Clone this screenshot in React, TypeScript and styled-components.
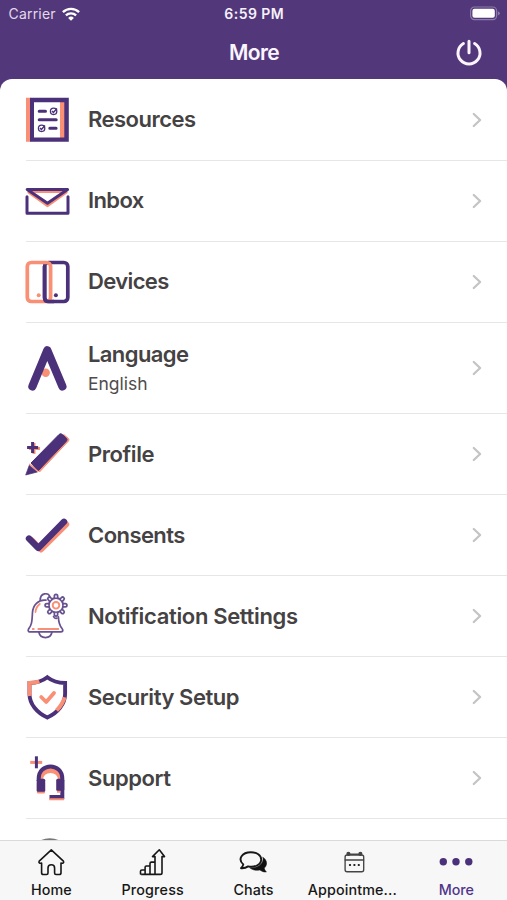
import React from "react";
import styled, { createGlobalStyle } from "styled-components";

const P = "#4b3179";
const O = "#f98f74";

const Global = createGlobalStyle`
  * { box-sizing: border-box; }
  body { margin: 0; background: #52387a; font-family: Inter, "Liberation Sans", sans-serif; }
`;

const Screen = styled.div`
  width: 507px;
  height: 900px;
  display: flex;
  flex-direction: column;
  overflow: hidden;
  background: #52387a;
`;

const StatusBar = styled.div`
  height: 27px;
  flex: none;
  display: grid;
  grid-template-columns: 1fr auto 1fr;
  align-items: center;
  padding: 0 7px 0 8.5px;
  color: #f6f0fb;
  font-size: 14px;
  line-height: 27px;
`;

const Carrier = styled.div`
  display: flex;
  align-items: center;
  gap: 6px;
  letter-spacing: 0.2px;
  color: #e2d8ec;
`;

const Clock = styled.div`
  font-weight: 600;
  letter-spacing: 0.45px;
`;

const Battery = styled.div`
  display: flex;
  justify-content: flex-end;
`;

const NavBar = styled.header`
  height: 52px;
  flex: none;
  display: grid;
  grid-template-columns: 1fr auto 1fr;
  align-items: center;
  padding-right: 24px;
`;

const Title = styled.h1`
  grid-column: 2;
  margin: 0 0 0 25px;
  color: #fbf5ff;
  font-size: 21px;
  font-weight: 600;
  line-height: 52px;
  letter-spacing: -0.55px;
`;

const PowerButton = styled.button`
  justify-self: end;
  display: flex;
  border: 0;
  padding: 0;
  background: none;
`;

const List = styled.main`
  flex: 1;
  min-height: 0;
  overflow: hidden;
  background: #fff;
  border-radius: 12px 12px 0 0;
`;

const Row = styled.div<{ $height: number }>`
  height: ${(p) => p.$height}px;
  display: flex;
  align-items: center;
  padding: 0 24px 0 23px;
`;

const Divider = styled.div`
  height: 1px;
  margin: 0 0 -1px 26px;
  background: #e6e6e6;
`;

const RowText = styled.div`
  flex: 1;
  margin-left: 17px;
`;

const RowIconSvg = styled.svg`
  flex: none;
  margin-top: 1.2px;
`;

const ChevronSvg = styled.svg`
  flex: none;
  margin-top: 1.2px;
`;

const Label = styled.div<{ $spacing: number }>`
  color: #454243;
  font-size: 22px;
  font-weight: 600;
  line-height: 30px;
  letter-spacing: ${(p) => p.$spacing}px;
  white-space: nowrap;
`;

const Sub = styled.div`
  color: #4f4c4d;
  font-size: 17.5px;
  line-height: 24px;
  margin-top: 3.7px;
`;

const TabBar = styled.nav`
  height: 60px;
  flex: none;
  display: grid;
  grid-template-columns: repeat(5, 1fr);
  background: #f7f7f7;
  border-top: 1px solid #dadada;
`;

const Tab = styled.div<{ $active?: boolean }>`
  display: flex;
  flex-direction: column;
  align-items: center;
  padding-top: 5px;
  color: ${(p) => (p.$active ? "#50358a" : "#161616")};
  font-size: 14.3px;
  font-weight: 500;
  line-height: 20px;
  white-space: nowrap;
`;

const TabLabel = styled.span<{ $spacing: number; $shift?: number }>`
  margin: 2px 0 0;
  transform: translateX(${(p) => p.$shift ?? 0}px);
  letter-spacing: ${(p) => p.$spacing}px;
`;

const Icon = ({ children }: { children: React.ReactNode }) => (
  <RowIconSvg width="48" height="48" viewBox="0 0 48 48" fill="none" stroke={P}>
    {children}
  </RowIconSvg>
);

const ResourcesIcon = () => (
  <Icon>
    <g stroke="none">
      <path fill={O} d="M3 1.8h4.5v44H3z" />
      <path fill={P} d="M7 1.8h38.8v44H7z" />
      <path fill="#fff" d="M11 6.2h26v35.4H11z" />
      <path fill={O} d="M37 6.2h4.3v35.4H37z" />
    </g>
    <path d="M16.2 15.3h6.3M16.2 23.7h17M26.8 32.3h6.3" strokeWidth="3" strokeLinecap="round" />
    <circle cx="30.6" cy="15.3" r="3.2" strokeWidth="1.3" />
    <circle cx="18.6" cy="32.3" r="3.2" strokeWidth="1.3" />
    <path d="m29 15 1.4 1.5 3.6-4M17 32l1.4 1.5 3.6-4" strokeWidth="1.5" />
  </Icon>
);

const InboxIcon = () => (
  <Icon>
    <path d="M6 15.3h37L24.5 28.5z" stroke={O} strokeWidth="3.2" strokeLinejoin="round" />
    <path d="M6 14 24.5 26 43 14z" fill="#fff" stroke="none" />
    <path d="M7 15h35" stroke={O} strokeWidth="2" />
    <path d="M4.2 12.4h40.4L24.5 26.2z" strokeWidth="3" strokeLinejoin="round" />
    <path d="M4 19.7v16.5h41V19.7" strokeWidth="3" strokeLinecap="round" strokeLinejoin="round" />
  </Icon>
);

const DevicesIcon = () => (
  <Icon>
    <rect x="21.6" y="4.5" width="23.2" height="39" rx="4" strokeWidth="3.7" />
    <rect x="4.3" y="4.5" width="23.3" height="39" rx="4" stroke={O} strokeWidth="3.7" />
    <path d="M21.6 8v32q0 3.5 3.5 3.5H31" strokeWidth="3.7" />
    <circle cx="15.7" cy="37.2" r="2" fill={O} stroke="none" />
    <circle cx="32.9" cy="37.2" r="2" fill={P} stroke="none" />
  </Icon>
);

const LanguageIcon = () => (
  <Icon>
    <circle cx="22.7" cy="28.8" r="4.2" fill={O} stroke="none" />
    <path d="M9.4 42.4 24.3 6.3l15.1 36.1" strokeWidth="8.2" strokeLinecap="round" strokeLinejoin="round" />
  </Icon>
);

const ProfileIcon = () => (
  <Icon>
    <path d="m16.5 42 29-31q1-1.5-.3-2.7l-4.5-3.8-30 31z" fill={O} stroke={O} strokeWidth="1" />
    <path d="m8 33 28-28.5q1.7-1.7 3.4 0l4 3.7q1.3 1.5 0 3L15 41z" fill={P} strokeWidth="1" />
    <path d="m6.3 35.2 8 6.8L2.7 45z" fill={P} strokeWidth=".7" />
    <path d="m6.2 34 9 7.5" stroke={O} strokeWidth="1.1" />
    <path d="M11 13v11M6 18.6h11" stroke={O} strokeWidth="3" />
    <path d="M9.6 12v11M4.1 17.4h11" strokeWidth="3" />
  </Icon>
);

const ConsentsIcon = () => (
  <Icon>
    <path d="m9 29.5 9 9 25.2-25.2" stroke={O} strokeWidth="6" strokeLinecap="round" strokeLinejoin="round" />
    <path d="m6 27.6 9.3 9.3L41 10.8" strokeWidth="6.4" strokeLinecap="round" strokeLinejoin="round" />
  </Icon>
);

const GearTeeth = () => (
  <path d="M33 5V4M33 21.6v1M24.7 13.3h-1M41.3 13.3h1M27.1 7.4l-.7-.7M38.9 19.2l.7.7M38.9 7.4l.7-.7M27.1 19.2l-.7.7" />
);

const NotificationIcon = () => (
  <Icon>
    <g strokeWidth="1.7" stroke="#67518f" strokeLinecap="round" strokeLinejoin="round">
      <path d="M23 8.2c-8-1-13 5.3-13.5 12.2-.5 8-.3 12-4 16.7-1 2.2.3 2.8 2 2.8h30c2.3 0 3-1.3 1.7-3.1-2.8-3.3-3.7-7.8-3.8-12" />
      <path d="M17.2 8.4c0-8 8.2-8 9.6-3.8M15.8 40c1.5 7.4 11.8 7.4 13.2 0M30.5 24.5q1 2.4 3.5 1.6" />
      <g strokeWidth="5"><GearTeeth /></g>
      <circle cx="33" cy="13.3" r="7.2" fill="#fff" strokeWidth="2" />
      <g strokeWidth="1.5" stroke="#fff"><GearTeeth /></g>
      <circle cx="33" cy="13.3" r="3.3" stroke={O} strokeWidth="1.9" />
    </g>
    <path d="M9.8 37h1M15.3 37h20M12.5 20c.3-4 1.8-6.3 4.3-8.1" stroke={O} strokeWidth="1.8" strokeLinecap="round" />
  </Icon>
);

const SecurityIcon = () => (
  <Icon>
    <path d="M24.3 4.2c5 4 10 5.7 17.8 5.8v11c0 10-7.5 19-17.8 23.5C14 40 6.5 31 6.5 21V10c7.8-.1 12.8-1.8 17.8-5.8z" strokeWidth="3.9" />
    <path d="M16.3 8.3c-2.7 1.1-6 1.6-9.8 1.7v11l.3 2M41.6 24.2c-1.3 5-4.3 9.5-8 13.2" stroke={O} strokeWidth="4" />
    <path d="m18.2 24 5 5 7.8-9" stroke={O} strokeWidth="3.8" strokeLinecap="round" strokeLinejoin="round" />
  </Icon>
);

const SupportIcon = () => (
  <Icon>
    <path d="M7.2 8.4h12" stroke={O} strokeWidth="3" />
    <path d="M13.4 2.3v12" strokeWidth="3" />
    <path d="M17.3 28v-1.5c0-13.5 20.4-13.5 20.4 0V28" stroke={O} strokeWidth="5" />
    <path d="M15.7 27v-2.2c0-16.4 23.6-16.4 23.6 0V43H26.5" strokeWidth="4" />
    <g stroke="none">
      <rect x="13.8" y="27.5" width="8.3" height="12" rx="1.5" fill={O} />
      <rect x="13.7" y="24.7" width="8.5" height="13" rx="1.5" fill={P} />
      <rect x="33.2" y="24.7" width="8.1" height="12.2" rx="1.5" fill={P} />
      <path d="M34 36.8h3.4v2H34zM26.2 44.3h15v1.9h-15z" fill={O} />
    </g>
  </Icon>
);

const AboutIcon = () => (
  <Icon>
    <circle cx="26.8" cy="24.8" r="20.5" strokeWidth="2" stroke="#777" />
  </Icon>
);

const Chevron = () => (
  <ChevronSvg width="12" height="18" viewBox="0 0 12 18" fill="none" stroke="#c4c4c6" strokeWidth="2.3" strokeLinecap="round" strokeLinejoin="round">
    <path d="m2.8 3 6.3 6-6.3 6" />
  </ChevronSvg>
);

interface Item {
  label: string;
  icon: React.FC;
  sub?: string;
  height?: number;
  spacing?: number;
}

const items: Item[] = [
  { label: "Resources", icon: ResourcesIcon, spacing: -0.52 },
  { label: "Inbox", icon: InboxIcon, spacing: -0.6 },
  { label: "Devices", icon: DevicesIcon, spacing: -0.62 },
  { label: "Language", icon: LanguageIcon, sub: "English", height: 91.6, spacing: -0.6 },
  { label: "Profile", icon: ProfileIcon, spacing: -0.42 },
  { label: "Consents", icon: ConsentsIcon, spacing: -0.56 },
  { label: "Notification Settings", icon: NotificationIcon, spacing: -0.34 },
  { label: "Security Setup", icon: SecurityIcon, spacing: -0.44 },
  { label: "Support", icon: SupportIcon, spacing: -0.42 },
];

const TabIcon = ({ children }: { children: React.ReactNode }) => (
  <svg width="34" height="32" viewBox="0 0 34 32" fill="none" stroke="#171717" strokeWidth="1.6" strokeLinejoin="round" strokeLinecap="round">
    {children}
  </svg>
);

const HomeIcon = () => (
  <TabIcon>
    <path d="M17.3 3.8 5.2 15.1c-.9 1.3.4 2.5 2.4 2v9.6q0 1.8 1.8 1.8h3.2q1.4 0 1.4-1.4v-5.2q0-3.2 3.3-3.2t3.3 3.2v5.2q0 1.4 1.4 1.4h3.2q1.8 0 1.8-1.8v-9.6c2 .5 3.3-.7 2.4-2z" />
  </TabIcon>
);

const ProgressIcon = () => (
  <TabIcon>
    <path d="M5.5 28v-2.7q0-1.3 1.4-1.3h3.2v4.4zM10.1 28.4v-7.1q0-1.3 1.3-1.3h3.6v8.4zM15 28.4V17.5q0-1.4 1.4-1.4H20v12.3zM20 28.4V10.6h-2.5L24.3 3.8l5.2 6.8H27v16.1q0 1.7-1.7 1.7zM6.3 28.4H25" />
  </TabIcon>
);

const ChatsIcon = () => (
  <TabIcon>
    <path d="M27 11.5c4.3 2.3 4.7 7.7 1.3 10.6.2 1.6 1 2.7 2.1 3.9-2.7.2-4.8-.7-6.5-2-4 .8-8 0-10.4-2.4 7.8 1.2 14.5-3.8 13.5-10.1z" fill="#111" stroke="#111" strokeWidth=".5" />
    <path d="M5 22.2c1.2-1.2 2-2.4 2.3-3.8-6.1-5.4-1-12.2 7.5-12.2 6 0 10.4 3 10.4 7.3 0 4.7-5.8 8.3-13.1 6.9C10.2 21.7 7.8 22.5 5 22.2z" strokeWidth="1.9" />
  </TabIcon>
);

const CalendarIcon = () => (
  <TabIcon>
    <g stroke="#444" strokeWidth="1.35" transform="translate(.7 0)">
      <rect x="6.4" y="9" width="18.6" height="16.7" rx="2" />
      <path d="M6.5 14h18.4M10.2 8.2h11" />
      <circle cx="9.7" cy="7.9" r="1.4" fill="#444" />
      <circle cx="21.7" cy="7.9" r="1.4" fill="#444" />
    </g>
    <path d="M11.9 19h.2M16.3 19h.2M20.7 19h.2" strokeWidth="2.1" />
  </TabIcon>
);

const MoreIcon = () => (
  <svg width="34" height="32" viewBox="0 0 34 32" fill={P}>
    <circle cx="4.3" cy="15.7" r="3.7" />
    <circle cx="17" cy="15.7" r="3.7" />
    <circle cx="29.8" cy="15.7" r="3.7" />
  </svg>
);

export default function App() {
  return (
    <Screen>
      <Global />
      <StatusBar>
        <Carrier>
          Carrier
          <svg width="18" height="14" viewBox="0 0 18 14" fill="none" stroke="#fff" strokeWidth="2.4">
            <path d="M.9 5.1a11.7 11.7 0 0 1 16.2 0M3.9 8.4a7.4 7.4 0 0 1 10.2 0" />
            <path d="M9 13.8 6.1 10.9a4.1 4.1 0 0 1 5.8 0z" fill="#fff" stroke="none" />
          </svg>
        </Carrier>
        <Clock>6:59 PM</Clock>
        <Battery>
          <svg width="31" height="15" viewBox="0 0 31 15">
            <rect x="1.6" y="1" width="26" height="12.6" rx="3.8" fill="none" stroke="#8c7aa8" strokeWidth="1.2" />
            <rect x="3.4" y="2.8" width="22.4" height="9" rx="2.1" fill="#fff" />
            <path d="M28.9 5.2q2 .8 2 2.1t-2 2.1z" fill="#8c7aa8" />
          </svg>
        </Battery>
      </StatusBar>
      <NavBar>
        <Title>More</Title>
        <PowerButton aria-label="Log out">
          <svg width="28" height="28" viewBox="0 0 28 28" fill="none" stroke="#fcf5ff" strokeWidth="3" strokeLinecap="round">
            <path d="M14 2.3v11.4M8.4 4.5a11 11 0 1 0 11.2 0" />
          </svg>
        </PowerButton>
      </NavBar>
      <List>
        {items.map(({ label, icon: RowIcon, sub, height = 80.95, spacing = 0 }) => (
          <React.Fragment key={label}>
            <Row $height={height}>
              <RowIcon />
              <RowText>
                <Label $spacing={spacing}>{label}</Label>
                {sub && <Sub>{sub}</Sub>}
              </RowText>
              <Chevron />
            </Row>
            <Divider />
          </React.Fragment>
        ))}
        <Row $height={80.95}>
          <AboutIcon />
        </Row>
      </List>
      <TabBar>
        <Tab><HomeIcon /><TabLabel $spacing={0.1} $shift={0.6}>Home</TabLabel></Tab>
        <Tab><ProgressIcon /><TabLabel $spacing={0.2} $shift={0.6}>Progress</TabLabel></Tab>
        <Tab><ChatsIcon /><TabLabel $spacing={0.1}>Chats</TabLabel></Tab>
        <Tab><CalendarIcon /><TabLabel $spacing={0.12} $shift={-2.5}>Appointme...</TabLabel></Tab>
        <Tab $active><MoreIcon /><TabLabel $spacing={0}>More</TabLabel></Tab>
      </TabBar>
    </Screen>
  );
}
